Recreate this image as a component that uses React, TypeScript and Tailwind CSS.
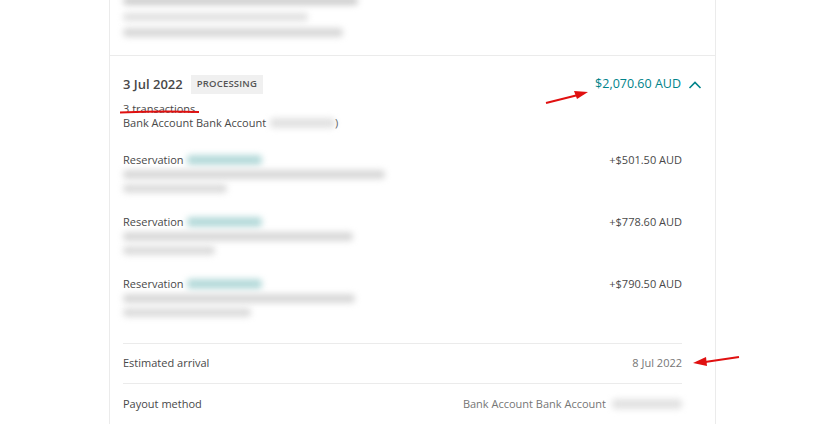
import React from "react";

const Blur = ({ w, h = 8, c = "bg-[#d4d4d4]", cls = "" }: { w: number; h?: number; c?: string; cls?: string }) => (
  <div className={`${c} blur-[3px] rounded-sm ${cls}`} style={{ width: w, height: h }} />
);

const Tx = ({ amount, l1, l2 }: { amount: string; l1: number; l2: number }) => (
  <div className="flex justify-between h-[62px]">
    <div className="flex flex-col">
      <div className="flex items-center h-[14px]">
        <span>Reservation</span>
        <Blur w={75} h={10} c="bg-[#b5dada]" cls="ml-[3px] blur-[2px]" />
      </div>
      <div className="mt-[3px] flex flex-col gap-[5px]">
        <Blur w={l1} h={9} c="bg-[#d8d8d8]" />
        <Blur w={l2} h={9} c="bg-[#dcdcdc]" />
      </div>
    </div>
    <div className="h-[14px] flex items-center">{amount}</div>
  </div>
);

export default function App() {
  return (
    <div
      className="relative w-[815px] h-[424px] overflow-hidden bg-white text-[11px] text-[#484848]"
      style={{ fontFamily: "'Open Sans', 'Liberation Sans', sans-serif" }}
    >
      <div className="ml-[109px] w-[607px] h-full border-x border-[#ebebeb]">
        <div className="h-[56px] border-b border-[#ebebeb] px-[13px] flex flex-col gap-[6px] pt-0">
          <Blur w={235} h={8} c="bg-[#cccccc]" cls="-mt-[3px]" />
          <Blur w={185} h={8} c="bg-[#e0e0e0]" cls="mt-[2px]" />
          <Blur w={220} h={9} c="bg-[#d8d8d8]" cls="mt-[1px]" />
        </div>
        <div className="px-[13px] pt-[19px]">
          <div className="flex justify-between items-center h-[19px]">
            <div className="flex items-center">
              <span className="text-[13px] font-semibold text-[#484848]">3 Jul 2022</span>
              <span className="ml-[8px] bg-[#f0f0f0] px-[6px] h-[19px] flex items-center text-[9.5px] font-semibold tracking-[0.2px] text-[#555]">PROCESSING</span>
            </div>
            <div className="flex items-center text-[#00838a] text-[12.5px]">
              <span>$2,070.60 AUD</span>
              <svg width="14" height="10" viewBox="0 0 14 10" className="ml-[7px]">
                <path d="M1.5 8 L7 2.5 L12.5 8" fill="none" stroke="#00838a" strokeWidth="1.6" />
              </svg>
            </div>
          </div>
          <div className="mt-[8px] leading-[14px]">3 transactions</div>
          <div className="flex items-center leading-[14px]">
            <span>Bank Account Bank Account</span>
            <Blur w={65} h={10} c="bg-[#e2e2e2]" cls="ml-[4px]" />
            <span>)</span>
          </div>
          <div className="mr-[20px] mt-[23px]">
            <Tx amount="+$501.50 AUD" l1={262} l2={104} />
            <Tx amount="+$778.60 AUD" l1={230} l2={92} />
            <Tx amount="+$790.50 AUD" l1={232} l2={128} />
            <div className="border-t border-[#ebebeb] mt-[4px] h-[40px] flex justify-between items-center">
              <span>Estimated arrival</span>
              <span className="text-[#767676]">8 Jul 2022</span>
            </div>
            <div className="border-t border-[#ebebeb] h-[41px] flex justify-between items-center">
              <span>Payout method</span>
              <div className="flex items-center text-[#767676]">
                <span>Bank Account Bank Account</span>
                <Blur w={70} h={10} c="bg-[#e2e2e2]" cls="ml-[6px]" />
              </div>
            </div>
          </div>
        </div>
      </div>
      <svg className="absolute left-0 top-0 pointer-events-none" width="815" height="424">
        <path d="M120 112.5 Q160 111 199 112" stroke="#e01010" strokeWidth="2" fill="none" />
        <line x1="546" y1="103" x2="578" y2="95" stroke="#e01010" strokeWidth="2.2" />
        <polygon points="588,92 574,91 577,99" fill="#e01010" />
        <line x1="739" y1="357" x2="705" y2="362" stroke="#e01010" strokeWidth="2.2" />
        <polygon points="693,363 706,357 707,366" fill="#e01010" />
      </svg>
    </div>
  );
}
